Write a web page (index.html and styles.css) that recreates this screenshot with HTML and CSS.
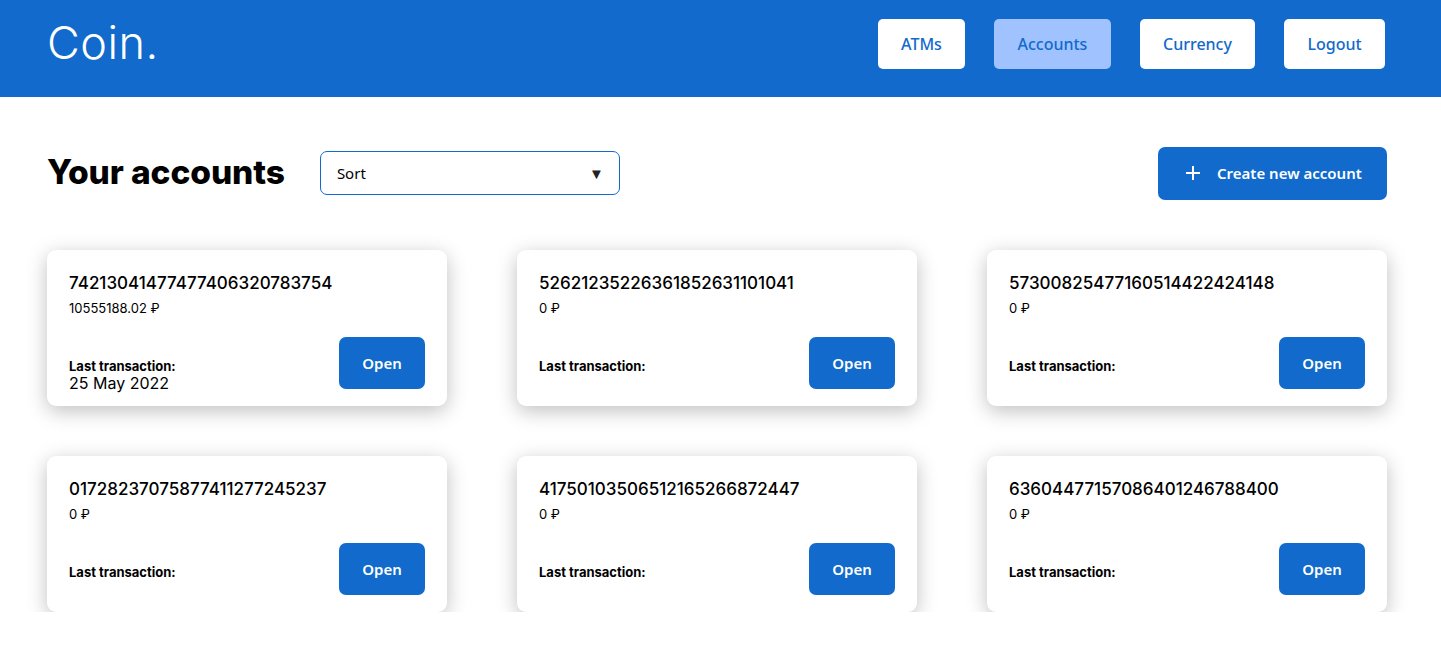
FILE: index.html
```html
<!DOCTYPE html>
<html lang="en">
<head>
<meta charset="utf-8">
<title>Coin.</title>
<link rel="stylesheet" href="styles.css">
</head>
<body>
<header class="header">
  <div class="logo">Coin.</div>
  <nav class="nav">
    <a class="nav-btn">ATMs</a>
    <a class="nav-btn nav-btn--active">Accounts</a>
    <a class="nav-btn">Currency</a>
    <a class="nav-btn">Logout</a>
  </nav>
</header>
<main class="main">
  <div class="toolbar">
    <h1 class="title">Your accounts</h1>
    <div class="select">
      <span>Sort</span>
      <span class="select-arrow">▼</span>
    </div>
    <button class="create-btn">
      <svg class="plus" width="14" height="14" viewBox="0 0 14 14"><path d="M7 0v14M0 7h14" stroke="#fff" stroke-width="2"/></svg>
      <span>Create new account</span>
    </button>
  </div>
  <div class="cards">
    <div class="card">
      <div class="card-number">74213041477477406320783754</div>
      <div class="card-balance">10555188.02 ₽</div>
      <div class="card-bottom">
        <div class="card-tx">
          <div class="card-tx-label">Last transaction:</div>
          <div class="card-tx-date">25 May 2022</div>
        </div>
        <button class="open-btn">Open</button>
      </div>
    </div>
    <div class="card">
      <div class="card-number">52621235226361852631101041</div>
      <div class="card-balance">0 ₽</div>
      <div class="card-bottom">
        <div class="card-tx">
          <div class="card-tx-label">Last transaction:</div>
        </div>
        <button class="open-btn">Open</button>
      </div>
    </div>
    <div class="card">
      <div class="card-number">57300825477160514422424148</div>
      <div class="card-balance">0 ₽</div>
      <div class="card-bottom">
        <div class="card-tx">
          <div class="card-tx-label">Last transaction:</div>
        </div>
        <button class="open-btn">Open</button>
      </div>
    </div>
    <div class="card">
      <div class="card-number">01728237075877411277245237</div>
      <div class="card-balance">0 ₽</div>
      <div class="card-bottom">
        <div class="card-tx">
          <div class="card-tx-label">Last transaction:</div>
        </div>
        <button class="open-btn">Open</button>
      </div>
    </div>
    <div class="card">
      <div class="card-number">41750103506512165266872447</div>
      <div class="card-balance">0 ₽</div>
      <div class="card-bottom">
        <div class="card-tx">
          <div class="card-tx-label">Last transaction:</div>
        </div>
        <button class="open-btn">Open</button>
      </div>
    </div>
    <div class="card">
      <div class="card-number">63604477157086401246788400</div>
      <div class="card-balance">0 ₽</div>
      <div class="card-bottom">
        <div class="card-tx">
          <div class="card-tx-label">Last transaction:</div>
        </div>
        <button class="open-btn">Open</button>
      </div>
    </div>
  </div>
</main>
</body>
</html>
```

FILE: styles.css
```css
* { box-sizing: border-box; }
html, body { margin: 0; padding: 0; }
body {
  font-family: Inter, "Noto Sans", sans-serif;
  background: #fff;
  color: #000;
}
.header {
  height: 97px;
  background: #116ACC;
  display: flex;
  align-items: center;
  justify-content: space-between;
  padding: 0 56px 0 47px;
}
.logo {
  font-family: Inter, sans-serif;
  font-weight: 300;
  font-size: 45px;
  color: #fff;
  margin-top: -13px;
  letter-spacing: 0.5px;
}
.nav {
  display: flex;
  gap: 29px;
  margin-top: -9px;
}
.nav-btn {
  height: 50px;
  display: flex;
  align-items: center;
  padding: 0 23.3px;
  background: #fff;
  border-radius: 5px;
  color: #116ACC;
  font-family: "Noto Sans", sans-serif;
  font-weight: 500;
  font-size: 16px;
}
.nav-btn--active { background: #A0C3FF; }
.main {
  padding: 50px 54px 0 47px;
}
.toolbar {
  display: flex;
  align-items: center;
  height: 53px;
}
.title {
  margin: -3px 35px 0 0;
  font-size: 33.5px;
  font-weight: 800;
  letter-spacing: -0.1px;
}
.select {
  width: 300px;
  height: 44px;
  margin-top: -1px;
  border: 1px solid #116ACC;
  border-radius: 7px;
  display: flex;
  align-items: center;
  justify-content: space-between;
  padding: 0 15px 0 16px;
  font-family: "Noto Sans", sans-serif;
  font-size: 15px;
  color: #000;
}
.select-arrow { font-size: 15px; color: #222; }
.create-btn {
  margin-left: auto;
  height: 53px;
  width: 229px;
  border: none;
  border-radius: 7px;
  background: #116ACC;
  color: #fff;
  display: flex;
  align-items: center;
  padding: 0 0 2px 28px;
  gap: 17px;
  font-family: "Noto Sans", sans-serif;
  font-weight: 600;
  font-size: 15px;
}
.cards {
  margin-top: 50px;
  display: grid;
  grid-template-columns: repeat(3, 400px);
  column-gap: 70px;
  row-gap: 50px;
}
.card {
  height: 156px;
  background: #fff;
  border-radius: 9px;
  box-shadow: 0 5px 20px rgba(0,0,0,0.25);
  padding: 22px 22px 17px 22px;
  display: flex;
  flex-direction: column;
}
.card-number {
  font-size: 17px;
  font-weight: 500;
  line-height: 22px;
}
.card-balance {
  margin-top: 6px;
  font-size: 13px;
  line-height: 16px;
}
.card-bottom {
  margin-top: auto;
  display: flex;
  justify-content: space-between;
  align-items: flex-start;
  height: 52px;
}
.card-tx { margin-top: 21px; }
.card-tx-label {
  font-size: 13px;
  font-weight: 700;
  line-height: 16px;
}
.card-tx-date {
  font-size: 16px;
  line-height: 19px;
}
.open-btn {
  width: 86px;
  height: 52px;
  border: none;
  border-radius: 7px;
  background: #116ACC;
  color: #fff;
  font-family: "Noto Sans", sans-serif;
  font-weight: 600;
  font-size: 15px;
  padding-bottom: 2px;
}
```
